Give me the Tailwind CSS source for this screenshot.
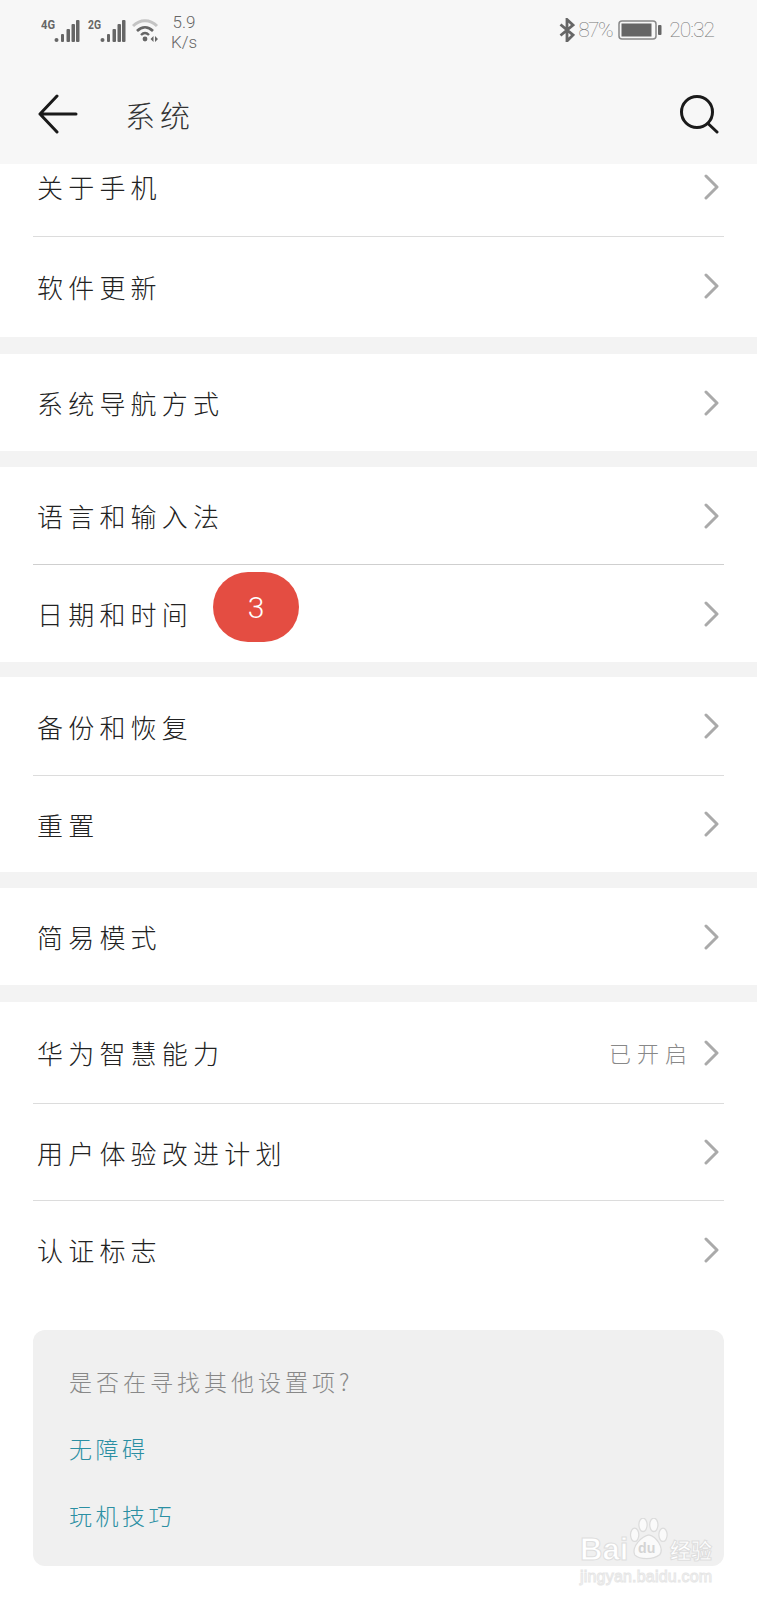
<!DOCTYPE html>
<html lang="zh-CN">
<head>
    <meta charset="UTF-8">
    <meta name="viewport" content="width=device-width, initial-scale=1.0">
    <title>系统</title>
    <script src="https://cdn.jsdelivr.net/npm/@tailwindcss/browser@4"></script>
</head>
<body class="bg-white font-['Noto_Sans_CJK_SC','Noto_Sans',sans-serif] text-[#222]">
<div class="relative w-[757px] h-[1600px] overflow-hidden bg-white">

    <!-- Status bar + title bar -->
    <header class="h-[164px] bg-[#f7f7f7]">
        <div class="h-[72px] flex items-start justify-between pl-[41px] pr-[43px] pt-[13px]">
            <div class="flex items-start text-[#666]">
                <svg width="39" height="25" viewBox="0 0 39 25" class="mt-[5px]">
                    <text x="0" y="11" font-size="12" font-weight="700" font-family="Roboto" fill="#666" textLength="14" lengthAdjust="spacingAndGlyphs">4G</text>
                    <g fill="#666"><circle cx="15.500" cy="22" r="2"/><rect x="20" y="16" width="3" height="8" rx="1"/><rect x="25.500" y="11" width="3.500" height="13" rx="1"/><rect x="30.500" y="6" width="3.500" height="18" rx="1"/><rect x="35" y="2" width="3.500" height="22" rx="1"/></g>
                </svg>
                <svg width="39" height="25" viewBox="0 0 39 25" class="mt-[5px] ml-[7px]">
                    <text x="1" y="11" font-size="12" font-weight="700" font-family="Roboto" fill="#666" textLength="13" lengthAdjust="spacingAndGlyphs">2G</text>
                    <g fill="#666"><circle cx="15.500" cy="22" r="2"/><rect x="20" y="16" width="3" height="8" rx="1"/><rect x="25.500" y="11" width="3.500" height="13" rx="1"/><rect x="30.500" y="6" width="3.500" height="18" rx="1"/><rect x="35" y="2" width="3.500" height="22" rx="1"/></g>
                </svg>
                <svg width="27" height="25" viewBox="0 0 27 25" class="mt-[6px] ml-[6px]" fill="none">
                    <path d="M1 7 C8 0 18 0 25 7" stroke="#c4c4c4" stroke-width="3"/>
                    <path d="M5 12 C10 7 16 7 21 12" stroke="#666" stroke-width="2.600"/>
                    <path d="M9 16 C11.500 13.500 14.500 13.500 17 16" stroke="#666" stroke-width="2.400"/>
                    <circle cx="13" cy="20" r="2.400" fill="#666"/>
                    <path d="M18.500 20 L21.500 17 V23 Z M23 17 L26 20 L23 23 Z" fill="#666"/>
                </svg>
                <div class="w-[30px] -mt-[1px] ml-[10px] text-center text-[17px] leading-[20px] font-['Roboto'] font-light text-[#666]">5.9<br>K/s</div>
            </div>
            <div class="flex items-center text-[#777] font-['Roboto'] font-thin mt-[4px]">
                <svg width="16" height="24" viewBox="0 0 16 24" fill="none" stroke="#666" stroke-width="2.800">
                    <path d="M1.500 6.500 L14 17 L8 23 V1.500 L14 7 L1.500 17.500"/>
                </svg>
                <span class="ml-[3px] text-[21px] leading-[26px] tracking-[-1.500px]">87%</span>
                <svg width="44" height="20" viewBox="0 0 44 20" class="ml-[6px]" fill="none">
                    <rect x="1" y="1" width="37" height="18" rx="3" stroke="#888" stroke-width="1.500"/>
                    <rect x="3.500" y="3.500" width="30" height="13" fill="#666"/>
                    <rect x="40" y="5" width="3.500" height="10" rx="1" fill="#666"/>
                </svg>
                <span class="ml-[7px] text-[21px] leading-[26px] tracking-[-1px]">20:32</span>
            </div>
        </div>
        <div class="h-[83px] flex items-center pl-[38px] pr-[38px]">
            <svg width="40" height="40" viewBox="0 0 40 40" fill="none" stroke="#1a1a1a" stroke-width="3" stroke-linecap="round" stroke-linejoin="round">
                <path d="M38 20 H2 M19 2 L2 20 L19 38"/>
            </svg>
            <h1 class="ml-[47px] text-[30px] leading-[40px] tracking-[5px] font-light text-[#333]">系统</h1>
            <svg class="ml-auto" width="40" height="40" viewBox="0 0 40 40" fill="none" stroke="#1a1a1a" stroke-width="3" stroke-linecap="round">
                <circle cx="18" cy="18" r="15.500"/>
                <path d="M29 29.500 L38 38"/>
            </svg>
        </div>
    </header>

    <!-- Settings list -->
    <main>
        <section class="pl-[33px] pr-[33px]">
            <div class="h-[73px] flex items-center justify-between border-b border-[#dcdcdc] pb-[27px]">
                <span class="pl-[4px] text-[26px] tracking-[5.200px] font-light">关于手机</span>
                <svg width="15" height="26" viewBox="0 0 15 26" fill="none" stroke="#aaa" stroke-width="3" stroke-linecap="round" stroke-linejoin="round" class="mr-[5px]"><path d="M2 2 L13 13 L2 24"/></svg>
            </div>
            <div class="h-[100px] flex items-center justify-between pb-[2px]">
                <span class="pl-[4px] text-[26px] tracking-[5.200px] font-light">软件更新</span>
                <svg width="15" height="26" viewBox="0 0 15 26" fill="none" stroke="#aaa" stroke-width="3" stroke-linecap="round" stroke-linejoin="round" class="mr-[5px]"><path d="M2 2 L13 13 L2 24"/></svg>
            </div>
        </section>
        <div class="h-[17px] bg-[#f3f3f3]"></div>

        <section class="pl-[33px] pr-[33px]">
            <div class="h-[97px] flex items-center justify-between">
                <span class="pl-[4px] text-[26px] tracking-[5.200px] font-light">系统导航方式</span>
                <svg width="15" height="26" viewBox="0 0 15 26" fill="none" stroke="#aaa" stroke-width="3" stroke-linecap="round" stroke-linejoin="round" class="mr-[5px]"><path d="M2 2 L13 13 L2 24"/></svg>
            </div>
        </section>
        <div class="h-[16px] bg-[#f3f3f3]"></div>

        <section class="pl-[33px] pr-[33px]">
            <div class="h-[98px] flex items-center justify-between border-b border-[#cfcfcf]">
                <span class="pl-[4px] text-[26px] tracking-[5.200px] font-light">语言和输入法</span>
                <svg width="15" height="26" viewBox="0 0 15 26" fill="none" stroke="#aaa" stroke-width="3" stroke-linecap="round" stroke-linejoin="round" class="mr-[5px]"><path d="M2 2 L13 13 L2 24"/></svg>
            </div>
            <div class="relative h-[97px] flex items-center justify-between">
                <span class="pl-[4px] text-[26px] tracking-[5.200px] font-light">日期和时间</span>
                <span class="absolute left-[180px] top-[7px] w-[86px] h-[70px] rounded-[35px] bg-[#e44d42] text-white text-[30px] font-light font-['Roboto'] flex items-center justify-center">3</span>
                <svg width="15" height="26" viewBox="0 0 15 26" fill="none" stroke="#aaa" stroke-width="3" stroke-linecap="round" stroke-linejoin="round" class="mr-[5px]"><path d="M2 2 L13 13 L2 24"/></svg>
            </div>
        </section>
        <div class="h-[15px] bg-[#f3f3f3]"></div>

        <section class="pl-[33px] pr-[33px]">
            <div class="h-[99px] flex items-center justify-between border-b border-[#dcdcdc]">
                <span class="pl-[4px] text-[26px] tracking-[5.200px] font-light">备份和恢复</span>
                <svg width="15" height="26" viewBox="0 0 15 26" fill="none" stroke="#aaa" stroke-width="3" stroke-linecap="round" stroke-linejoin="round" class="mr-[5px]"><path d="M2 2 L13 13 L2 24"/></svg>
            </div>
            <div class="h-[96px] flex items-center justify-between">
                <span class="pl-[4px] text-[26px] tracking-[5.200px] font-light">重置</span>
                <svg width="15" height="26" viewBox="0 0 15 26" fill="none" stroke="#aaa" stroke-width="3" stroke-linecap="round" stroke-linejoin="round" class="mr-[5px]"><path d="M2 2 L13 13 L2 24"/></svg>
            </div>
        </section>
        <div class="h-[16px] bg-[#f3f3f3]"></div>

        <section class="pl-[33px] pr-[33px]">
            <div class="h-[97px] flex items-center justify-between">
                <span class="pl-[4px] text-[26px] tracking-[5.200px] font-light">简易模式</span>
                <svg width="15" height="26" viewBox="0 0 15 26" fill="none" stroke="#aaa" stroke-width="3" stroke-linecap="round" stroke-linejoin="round" class="mr-[5px]"><path d="M2 2 L13 13 L2 24"/></svg>
            </div>
        </section>
        <div class="h-[17px] bg-[#f3f3f3]"></div>

        <section class="pl-[33px] pr-[33px]">
            <div class="h-[102px] flex items-center justify-between border-b border-[#dcdcdc]">
                <span class="pl-[4px] text-[26px] tracking-[5.200px] font-light">华为智慧能力</span>
                <span class="flex items-center">
                    <span class="mr-[11px] text-[22px] tracking-[6px] font-light text-[#888]">已开启</span>
                    <svg width="15" height="26" viewBox="0 0 15 26" fill="none" stroke="#aaa" stroke-width="3" stroke-linecap="round" stroke-linejoin="round" class="mr-[5px]"><path d="M2 2 L13 13 L2 24"/></svg>
                </span>
            </div>
            <div class="h-[97px] flex items-center justify-between border-b border-[#dcdcdc]">
                <span class="pl-[4px] text-[26px] tracking-[5.200px] font-light">用户体验改进计划</span>
                <svg width="15" height="26" viewBox="0 0 15 26" fill="none" stroke="#aaa" stroke-width="3" stroke-linecap="round" stroke-linejoin="round" class="mr-[5px]"><path d="M2 2 L13 13 L2 24"/></svg>
            </div>
            <div class="h-[97px] flex items-center justify-between">
                <span class="pl-[4px] text-[26px] tracking-[5.200px] font-light">认证标志</span>
                <svg width="15" height="26" viewBox="0 0 15 26" fill="none" stroke="#aaa" stroke-width="3" stroke-linecap="round" stroke-linejoin="round" class="mr-[5px]"><path d="M2 2 L13 13 L2 24"/></svg>
            </div>

            <!-- Suggestions card -->
            <div class="mt-[32px] h-[236px] rounded-[12px] bg-[#f0f0f0] pl-[36px] pt-[31px]">
                <p class="text-[23px] leading-[40px] tracking-[4px] font-light text-[#888]">是否在寻找其他设置项?</p>
                <p class="mt-[27px] text-[23px] leading-[40px] tracking-[3.500px] font-light text-[#2b8fa3]">无障碍</p>
                <p class="mt-[27px] text-[23px] leading-[40px] tracking-[3.500px] font-light text-[#2b8fa3]">玩机技巧</p>
            </div>
        </section>
    </main>

    <!-- Baidu watermark -->
    <div class="absolute left-[580px] top-[1518px] w-[140px] h-[68px] text-white pointer-events-none">
        <span class="absolute left-0 top-[17px] text-[31px] leading-[30px] font-bold font-['Liberation_Sans'] [-webkit-text-stroke:1px_#dedede]">Bai</span>
        <svg class="absolute left-[48px] top-0" width="40" height="42" viewBox="0 0 48 50" fill="#fafafa" stroke="#dcdcdc" stroke-width="1.500">
            <ellipse cx="8" cy="20" rx="5" ry="8"/>
            <ellipse cx="18" cy="8" rx="5" ry="8"/>
            <ellipse cx="31" cy="8" rx="5" ry="8"/>
            <ellipse cx="42" cy="20" rx="5" ry="8"/>
            <path d="M25 20 C34 22 44 36 38 44 C30 50 14 50 8 44 C4 34 16 22 25 20 Z"/>
            <text x="12" y="42" font-size="17" font-family="Liberation Sans" font-weight="700" fill="#d4d4d4" stroke="none">du</text>
        </svg>
        <span class="absolute left-[90px] top-[17px] text-[21px] leading-[28px] font-bold whitespace-nowrap [-webkit-text-stroke:1px_#dedede]">经验</span>
        <span class="absolute left-0 top-[49px] text-[16px] leading-[20px] tracking-[0.200px] font-['Liberation_Sans'] whitespace-nowrap [-webkit-text-stroke:1px_#e6e6e6]">jingyan.baidu.com</span>
    </div>
</div>
</body>
</html>
